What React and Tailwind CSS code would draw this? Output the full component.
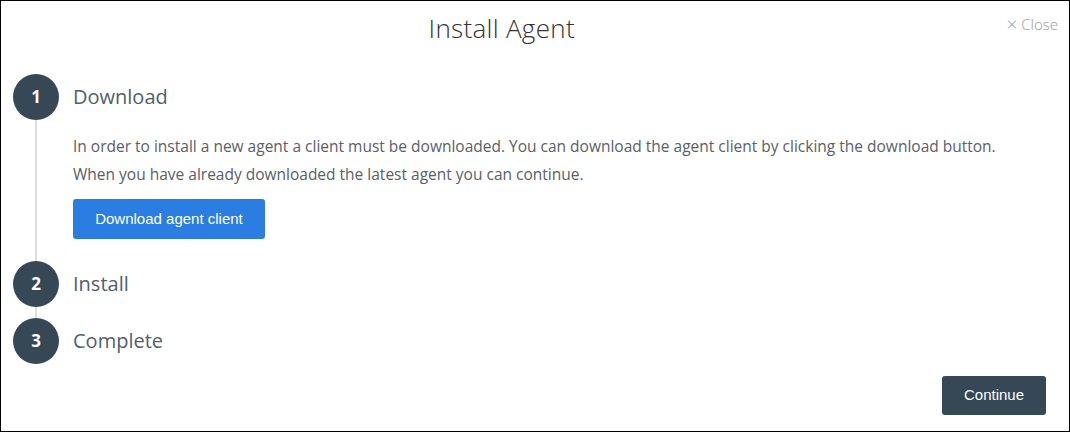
import React from "react";

const steps = [
  { id: 1, title: "Download", open: true },
  { id: 2, title: "Install" },
  { id: 3, title: "Complete" },
];

function StepCircle({ n }) {
  return (
    <div className="w-[46px] h-[46px] rounded-full bg-[#364756] flex items-center justify-center text-white text-[17px] font-bold shrink-0 font-['Open_Sans',sans-serif]">
      {n}
    </div>
  );
}

export default function App() {
  return (
    <div className="w-[1070px] h-[432px] border border-black bg-white relative flex flex-col font-['Open_Sans',sans-serif]">
      <div className="flex items-start h-[73px]">
        <div className="flex-1 text-center pt-[8px] text-[26px] font-light text-[#333] tracking-[0.3px]">
          Install Agent
        </div>
        <button className="pt-[12px] pr-[11px] pl-[4px] text-[15px] font-light text-[#999] flex items-center gap-[4px]">
          <span className="text-[19px] leading-none">×</span>Close
        </button>
      </div>

      <div className="pl-[12px]">
        {steps.map((s, i) => (
          <div key={s.id} className="flex">
            <div className="flex flex-col items-center w-[46px]">
              <StepCircle n={s.id} />
              {i < steps.length - 1 && (
                <div className="w-[2px] flex-1 bg-[#dddddd]"></div>
              )}
            </div>
            <div className="pl-[14px] pb-[11px]">
              <div className="h-[46px] flex items-center text-[20px] text-[#505f6c]">
                {s.title}
              </div>
              {s.open && (
                <div className="pt-[12px] pb-[11px]">
                  <p className="text-[15.5px] leading-[28px] text-[#5a6068]">
                    In order to install a new agent a client must be downloaded. You can download the agent client by clicking the download button.
                    <br />
                    When you have already downloaded the latest agent you can continue.
                  </p>
                  <button className="mt-[11px] h-[40px] w-[192px] rounded-[3px] bg-[#2b7de1] text-white text-[15px] font-['Liberation_Sans',Arial,sans-serif]">
                    Download agent client
                  </button>
                </div>
              )}
            </div>
          </div>
        ))}
      </div>

      <div className="flex justify-end pr-[23px] mt-[1px]">
        <button className="h-[39px] w-[104px] rounded-[3px] bg-[#364756] text-white text-[15px] font-['Liberation_Sans',Arial,sans-serif]">
          Continue
        </button>
      </div>
    </div>
  );
}
